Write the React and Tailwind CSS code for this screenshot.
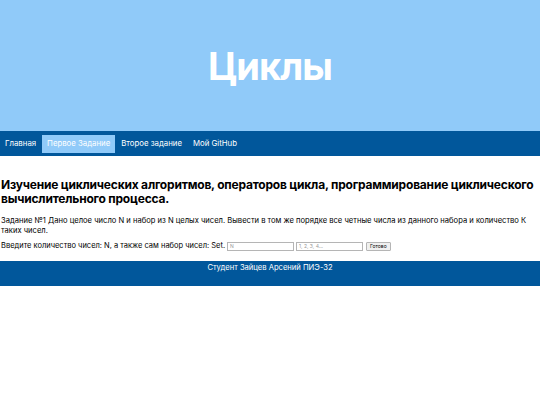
export default function App() {
  const links = ['Главная', 'Первое Задание', 'Второе задание', 'Мой GitHub'];

  return (
    <div className="w-full min-h-screen bg-white text-black" style={{ fontFamily: 'Inter, "Noto Sans", sans-serif' }}>
      {/* Header */}
      <header className="h-[131px] bg-[#90caf9] flex items-center justify-center">
        <h1 className="text-[38px] font-bold text-white leading-none tracking-tight">Циклы</h1>
      </header>

      {/* Nav */}
      <nav className="h-[25px] bg-[#01579b] flex items-center">
        {links.map((l, i) => (
          <a
            key={l}
            href="#"
            className={
              'text-[7.8px] text-white px-[5px] h-[18px] flex items-center mr-[1px] ' +
              (i === 1 ? 'bg-[#90caf9]' : '')
            }
          >
            {l}
          </a>
        ))}
      </nav>

      {/* Main */}
      <main className="px-[1px] pt-[22px] pb-[10px]">
        <h2 className="text-[12px] font-bold leading-[14px] tracking-[-0.2px]">
          Изучение циклических алгоритмов, операторов цикла, программирование циклического вычислительного процесса.
        </h2>
        <p className="text-[7.6px] leading-[9.5px] mt-[10px] pr-[6px]">
          Задание №1 Дано целое число N и набор из N целых чисел. Вывести в том же порядке все четные числа из данного набора и количество К таких чисел.
        </p>
        <div className="flex items-center mt-[6px] text-[7.5px] h-[10px]">
          <span>Введите количество чисел: N, а также сам набор чисел: Set.</span>
          <input
            className="ml-[2px] w-[67px] h-[9px] border border-[#b5b5b5] text-[5px] px-[2px] placeholder:text-[#999]"
            placeholder="N"
          />
          <input
            className="ml-[2px] w-[67px] h-[9px] border border-[#b5b5b5] text-[5px] px-[2px] placeholder:text-[#999]"
            placeholder="1, 2, 3, 4..."
          />
          <button className="ml-[3px] h-[9px] px-[3px] border border-[#b5b5b5] rounded-[1px] bg-[#f0f0f0] text-[5px] leading-none">
            Готово
          </button>
        </div>
      </main>

      {/* Footer */}
      <footer className="h-[25px] bg-[#01579b] text-white text-[7.6px] text-center pt-[1px]">
        Студент Зайцев Арсений ПИЭ-32
      </footer>
    </div>
  );
}
